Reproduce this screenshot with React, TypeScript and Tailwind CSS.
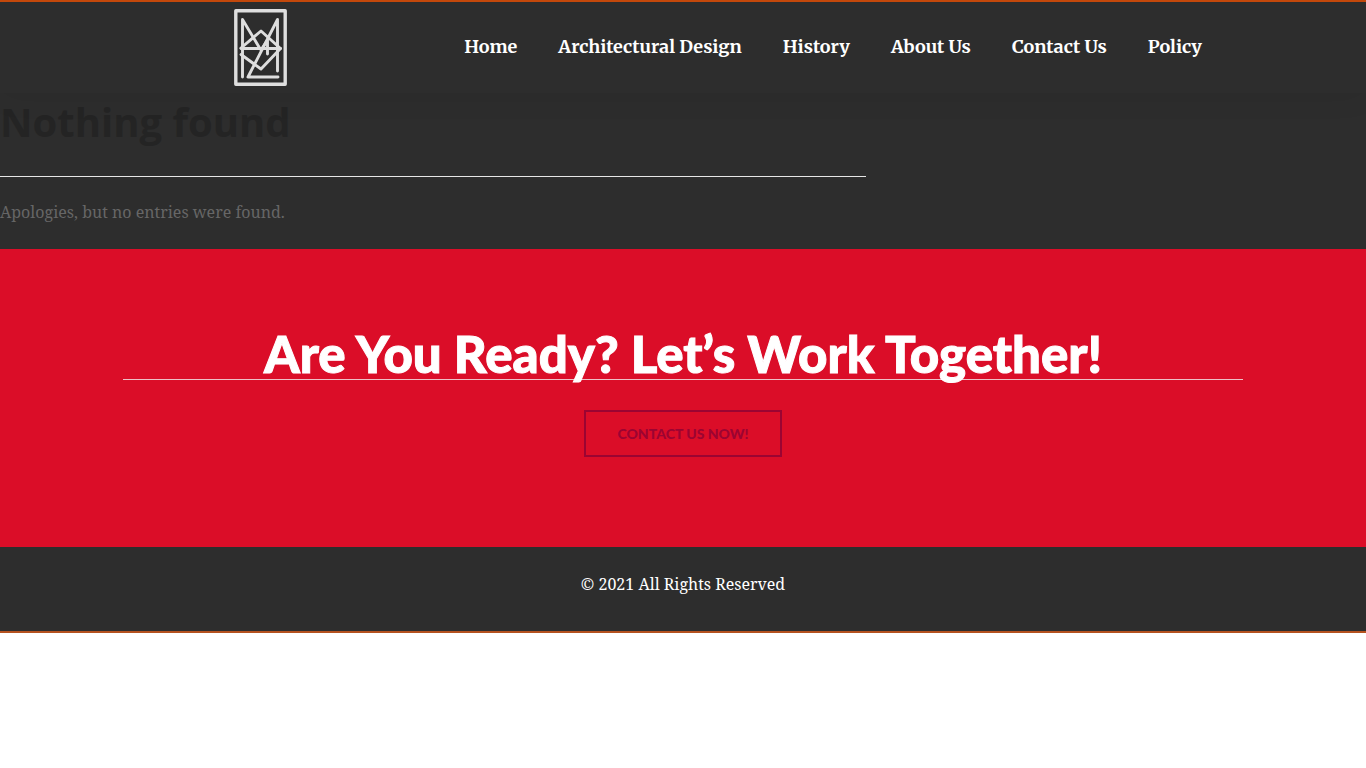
import React from "react";

const links = ["Home", "Architectural Design", "History", "About Us", "Contact Us", "Policy"];

const Logo = () => (
  <svg viewBox="0 0 54 78" className="w-[54px] h-[78px]" fill="none" stroke="#dedede" strokeLinecap="round" strokeLinejoin="round" aria-hidden="true">
    <rect x="1.800" y="1.800" width="49.400" height="73.400" strokeWidth="3.4" />
    <g strokeWidth="2.9">
      <path d="M8.500 68V10.500L25 38" />
      <path d="M43.500 62V10.500L14 68H44" />
      <path d="M7 39.500H46.500" />
      <path d="M7 39L27 22L46.500 39.500L27 60L7 45.500" />
      <path d="M27 41L33.500 31V45" />
    </g>
  </svg>
);

const Header = () => (
  <header className="relative border-t-2 border-[#c3480b] bg-[#2d2d2d] shadow-[0_0_30px_rgba(0,0,0,0.08)]">
    <div className="mx-auto flex h-[91px] max-w-[1138px] items-center justify-between pl-[120px] pr-[50px]">
      <a href="#" aria-label="Home page">
        <Logo />
      </a>
      <nav className="flex gap-[41px] whitespace-nowrap pb-0.5 font-['Merriweather','Liberation_Serif',serif] text-lg font-bold text-white">
        {links.map((link) => (
          <a key={link} href="#">
            {link}
          </a>
        ))}
      </nav>
    </div>
  </header>
);

const App = () => {
  return (
    <div className="border-b-2 border-[#b5521f] bg-[#2d2d2d] font-['Droid_Serif','Noto_Serif','Liberation_Serif',serif]">
      <Header />

      <main>
        <section className="flex h-[156px] flex-col">
          <h1 className="pt-1 font-['Open_Sans',sans-serif] text-[40px] font-bold leading-[50px] text-[#242424]">
            Nothing found
          </h1>
          <hr className="mt-[29px] w-[866px] max-w-full border-[#e6e6e6]" />
          <p className="mt-[23px] text-base leading-6 text-[#666666]">Apologies, but no entries were found.</p>
        </section>

        {/* Call to action */}
        <section className="flex flex-col items-center bg-[#db0d28] pt-20 pb-[90px]">
          <div className="w-full max-w-[1120px] border-b border-[#eec0c6] text-center">
            <h2 className="font-['Lato',sans-serif] text-[51px] font-black leading-[50px] text-white [-webkit-text-stroke:1px_white]">
              Are You Ready? Let’s Work Together!
            </h2>
          </div>
          <a
            href="#"
            className="mt-[30px] border-2 border-[#9c0432] px-8 py-3 font-['Lato',sans-serif] text-[14px] font-black leading-[19px] text-[#9c0432]"
          >
            CONTACT US NOW!
          </a>
        </section>
      </main>

      <footer className="pt-[25px] pb-[35px] text-center text-base leading-6 text-white">
        <p>© 2021 All Rights Reserved</p>
      </footer>
    </div>
  );
};

export default App;
